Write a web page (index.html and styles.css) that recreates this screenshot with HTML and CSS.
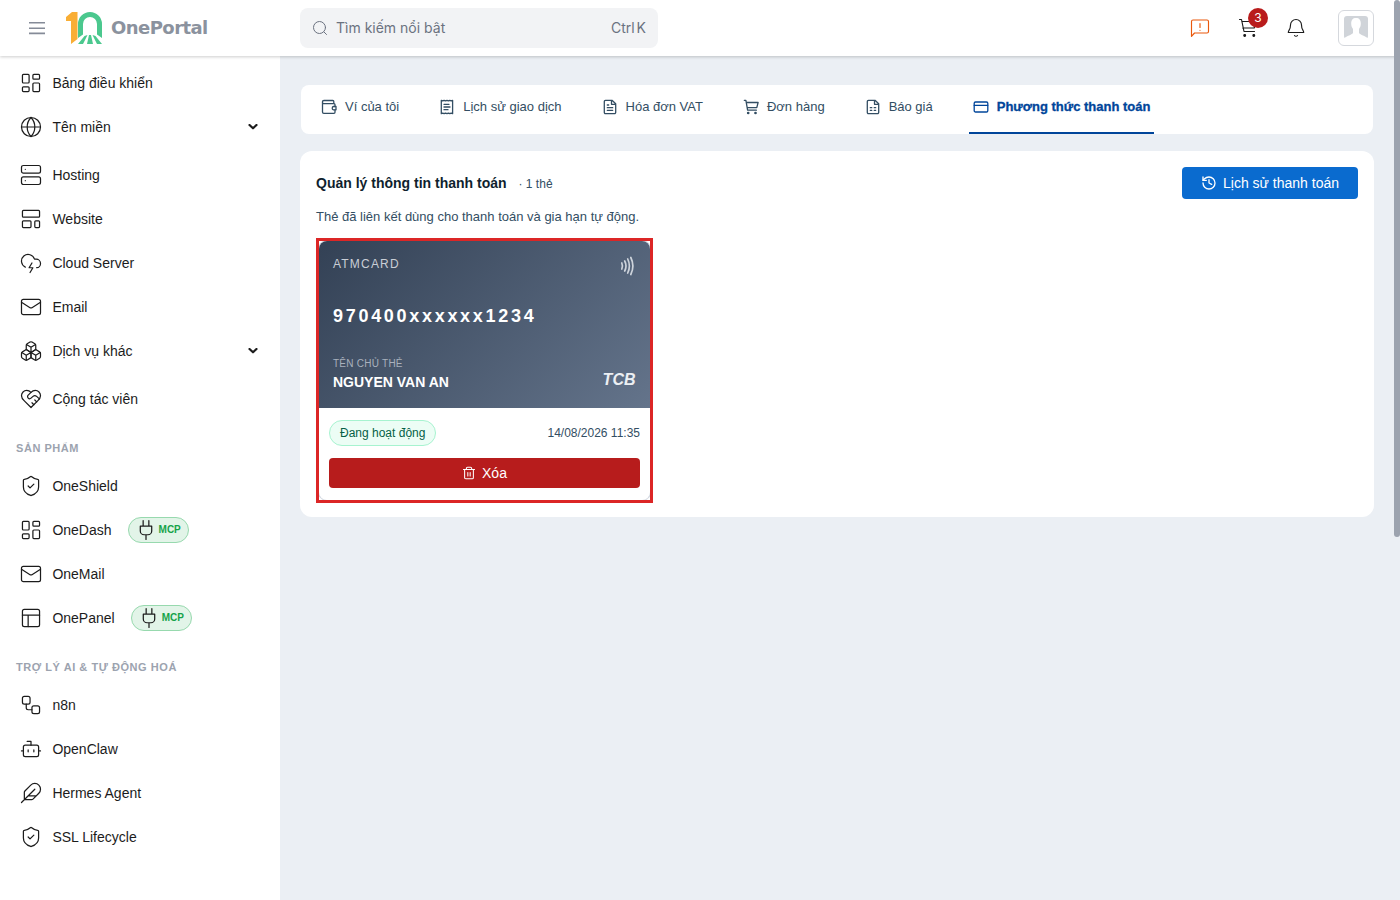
FILE: index.html
```html
<!DOCTYPE html>
<html lang="vi">
<head>
    <meta charset="UTF-8">
    <title>OnePortal</title>
    <link rel="stylesheet" href="styles.css">
</head>
<body>
    <header class="header">
        <svg class="menu-toggle" viewBox="0 0 16 14"><path d="M0 1.800h16M0 7.200h16M0 12.400h16"/></svg>
        <svg class="logo" viewBox="0 0 38 34">
            <path class="logo-one" d="M0 6 6 1h5.500v27L5 33V10H0z"/>
            <path class="logo-arch" d="M12 27V13a12 12 0 0 1 24 0v14l-5-3.500V13a7 7 0 0 0-14 0v10.500z"/>
            <path class="logo-arch" d="M18.500 25 21.500 24l-4.500 9h-5zM23 24h2l2 9h-6zM26.500 24l3 1 6.500 8h-5z"/>
        </svg>
        <span class="brand">OnePortal</span>
        <div class="search">
            <svg class="search-icon" viewBox="0 0 16 16"><circle cx="7.500" cy="7.500" r="6"/><path d="m12 12 2.500 2.500"/></svg>
            <span class="search-text">Tìm kiếm nổi bật</span>
            <span class="shortcut"><span>Ctrl</span><span>K</span></span>
        </div>
        <div class="header-actions">
            <svg class="action-icon icon-feedback" viewBox="0 0 24 24"><path d="M20.500 15.500a1.500 1.500 0 0 1-1.500 1.500H6.500L3.500 20.400V5.500A1.500 1.500 0 0 1 5 4h14a1.500 1.500 0 0 1 1.500 1.500z"/><path d="M12 7.500v4M12 14.200v.100"/></svg>
            <div class="cart">
                <svg class="action-icon" viewBox="0 0 24 24"><circle class="dot" cx="8.700" cy="19.500" r=".9"/><circle class="dot" cx="17.800" cy="19.500" r=".9"/><path d="M3.500 3.500h2l2.500 12h10.500M6.700 12h11.500l2-6.500H5.800"/></svg>
                <span class="cart-count">3</span>
            </div>
            <svg class="action-icon" viewBox="0 0 24 24"><path d="M6.500 9a5.500 5.500 0 0 1 11 0c0 5 2.200 5 2.200 7.500H4.300C4.300 14 6.500 14 6.500 9"/><path d="M10.500 19.500a1.900 1.900 0 0 0 3 0"/></svg>
            <div class="avatar">
                <svg viewBox="0 0 24 24"><rect class="avatar-bg" width="24" height="23" rx="3"/><path class="avatar-man" d="M12 2C8.700 2 7.200 4 7.200 7.500c0 2.500.700 4 1.800 5.500v4c-1.500 2.200-6 2.500-9 5.500V24h24v-1.500c-3-3-7.500-3.300-9-5.500v-4c1.100-1.500 1.800-3 1.800-5.500C16.800 4 15.300 2 12 2z"/></svg>
            </div>
        </div>
    </header>

    <div class="layout">
        <nav class="sidebar">
            <a class="nav-item">
                <svg class="icon" viewBox="0 0 24 24"><rect x="3" y="3" width="7" height="9" rx="1"/><rect x="14" y="3" width="7" height="5" rx="1"/><rect x="14" y="12" width="7" height="9" rx="1"/><rect x="3" y="16" width="7" height="5" rx="1"/></svg>
                <span>Bảng điều khiển</span>
            </a>
            <a class="nav-item has-children">
                <svg class="icon" viewBox="0 0 24 24"><circle cx="12" cy="12" r="10"/><path d="M12 2a14.500 14.500 0 0 0 0 20 14.500 14.500 0 0 0 0-20M2 12h20"/></svg>
                <span>Tên miền</span>
                <svg class="chevron" viewBox="0 0 10 6"><path d="m1.500 1 3.500 3.300L8.500 1"/></svg>
            </a>
            <a class="nav-item">
                <svg class="icon" viewBox="0 0 24 24"><rect x="2" y="2" width="20" height="8" rx="2"/><rect x="2" y="14" width="20" height="8" rx="2"/><path d="M6 6h.01M6 18h.01"/></svg>
                <span>Hosting</span>
            </a>
            <a class="nav-item">
                <svg class="icon" viewBox="0 0 24 24"><rect x="3" y="3" width="18" height="7" rx="1"/><rect x="3" y="14" width="9" height="7" rx="1"/><rect x="16" y="14" width="5" height="7" rx="1"/></svg>
                <span>Website</span>
            </a>
            <a class="nav-item">
                <svg class="icon" viewBox="0 0 24 24"><path d="M6 16.326A7 7 0 1 1 15.710 8h1.790a4.500 4.500 0 0 1 .500 8.973"/><path d="m13 12-3 5h4l-3 5"/></svg>
                <span>Cloud Server</span>
            </a>
            <a class="nav-item">
                <svg class="icon" viewBox="0 0 24 24"><rect x="2" y="4" width="20" height="16" rx="2"/><path d="m22 7-8.970 5.700a1.940 1.940 0 0 1-2.060 0L2 7"/></svg>
                <span>Email</span>
            </a>
            <a class="nav-item has-children">
                <svg class="icon" viewBox="0 0 24 24"><path d="M2.970 12.920A2 2 0 0 0 2 14.630v3.240a2 2 0 0 0 .970 1.710l3 1.800a2 2 0 0 0 2.060 0L12 19v-5.500l-5-3-4.030 2.420Z"/><path d="m7 16.500-4.740-2.850M7 16.500l5-3M7 16.500v5.170M12 13.500V19l3.970 2.380a2 2 0 0 0 2.060 0l3-1.800a2 2 0 0 0 .970-1.710v-3.240a2 2 0 0 0-.970-1.710L17 10.500l-5 3Z"/><path d="m17 16.500-5-3M17 16.500l4.740-2.850M17 16.500v5.170"/><path d="M7.970 4.420A2 2 0 0 0 7 6.130v4.370l5 3 5-3V6.130a2 2 0 0 0-.970-1.710l-3-1.800a2 2 0 0 0-2.060 0l-3 1.800Z"/><path d="M12 8 7.260 5.150M12 8l4.740-2.850M12 13.500V8"/></svg>
                <span>Dịch vụ khác</span>
                <svg class="chevron" viewBox="0 0 10 6"><path d="m1.500 1 3.500 3.300L8.500 1"/></svg>
            </a>
            <a class="nav-item">
                <svg class="icon" viewBox="0 0 24 24"><path d="M19 14c1.490-1.460 3-3.210 3-5.500A5.500 5.500 0 0 0 16.500 3c-1.760 0-3 .500-4.500 2-1.500-1.500-2.740-2-4.500-2A5.500 5.500 0 0 0 2 8.500c0 2.300 1.500 4.050 3 5.500l7 7Z"/><path d="M12 5 9.040 7.960a2.170 2.170 0 0 0 0 3.080c.820.820 2.130.850 3 .070l2.070-1.900a2.820 2.820 0 0 1 3.790 0l2.960 2.660M18 15l-2-2M15 18l-2-2"/></svg>
                <span>Cộng tác viên</span>
            </a>

            <h3 class="nav-heading">SẢN PHẨM</h3>
            <a class="nav-item">
                <svg class="icon" viewBox="0 0 24 24"><path d="M20 13c0 5-3.500 7.500-7.660 8.950a1 1 0 0 1-.670-.010C7.500 20.500 4 18 4 13V6a1 1 0 0 1 1-1c2 0 4.500-1.200 6.240-2.720a1.170 1.170 0 0 1 1.520 0C14.510 3.810 17 5 19 5a1 1 0 0 1 1 1z"/><path d="m9 12 2 2 4-4"/></svg>
                <span>OneShield</span>
            </a>
            <a class="nav-item">
                <svg class="icon" viewBox="0 0 24 24"><rect x="3" y="3" width="7" height="9" rx="1"/><rect x="14" y="3" width="7" height="5" rx="1"/><rect x="14" y="12" width="7" height="9" rx="1"/><rect x="3" y="16" width="7" height="5" rx="1"/></svg>
                <span>OneDash</span>
                <span class="mcp"><svg class="icon" viewBox="0 0 24 24"><path d="M12 22v-5M9 8V2M15 8V2M18 8v5a4 4 0 0 1-4 4h-4a4 4 0 0 1-4-4V8Z"/></svg><b>MCP</b></span>
            </a>
            <a class="nav-item">
                <svg class="icon" viewBox="0 0 24 24"><rect x="2" y="4" width="20" height="16" rx="2"/><path d="m22 7-8.970 5.700a1.940 1.940 0 0 1-2.060 0L2 7"/></svg>
                <span>OneMail</span>
            </a>
            <a class="nav-item">
                <svg class="icon" viewBox="0 0 24 24"><rect x="3" y="3" width="18" height="18" rx="2"/><path d="M3 9h18M9 21V9"/></svg>
                <span>OnePanel</span>
                <span class="mcp"><svg class="icon" viewBox="0 0 24 24"><path d="M12 22v-5M9 8V2M15 8V2M18 8v5a4 4 0 0 1-4 4h-4a4 4 0 0 1-4-4V8Z"/></svg><b>MCP</b></span>
            </a>

            <h3 class="nav-heading">TRỢ LÝ AI &amp; TỰ ĐỘNG HOÁ</h3>
            <a class="nav-item">
                <svg class="icon" viewBox="0 0 24 24"><rect x="3" y="3" width="8" height="8" rx="2"/><path d="M7 11v4a2 2 0 0 0 2 2h4"/><rect x="13" y="13" width="8" height="8" rx="2"/></svg>
                <span>n8n</span>
            </a>
            <a class="nav-item">
                <svg class="icon" viewBox="0 0 24 24"><path d="M12 8V4H8"/><rect x="4" y="8" width="16" height="12" rx="2"/><path d="M2 14h2M20 14h2M15 13v2M9 13v2"/></svg>
                <span>OpenClaw</span>
            </a>
            <a class="nav-item">
                <svg class="icon" viewBox="0 0 24 24"><path d="M12.670 19a2 2 0 0 0 1.416-.588l6.154-6.172a6 6 0 0 0-8.490-8.490L5.586 9.914A2 2 0 0 0 5 11.328V18a1 1 0 0 0 1 1zM16 8 2 22M17.500 15H9"/></svg>
                <span>Hermes Agent</span>
            </a>
            <a class="nav-item">
                <svg class="icon" viewBox="0 0 24 24"><path d="M20 13c0 5-3.500 7.500-7.660 8.950a1 1 0 0 1-.670-.010C7.500 20.500 4 18 4 13V6a1 1 0 0 1 1-1c2 0 4.500-1.200 6.240-2.720a1.170 1.170 0 0 1 1.520 0C14.510 3.810 17 5 19 5a1 1 0 0 1 1 1z"/><path d="m9 12 2 2 4-4"/></svg>
                <span>SSL Lifecycle</span>
            </a>
        </nav>

        <main class="content">
            <div class="tabs">
                <a class="tab">
                    <svg class="tab-icon" viewBox="0 0 16 16"><path d="M12.800 4.700V2.500A1 1 0 0 0 11.800 1.500H3a1.500 1.500 0 0 0 0 3.200h10a1 1 0 0 1 1 1v1.800M1.500 3V13A1.300 1.300 0 0 0 2.800 14.300h10.200a1 1 0 0 0 1-1v-2.500"/><path d="M15 7.500h-2.500a1.700 1.700 0 0 0 0 3.300H15z"/></svg>
                    <span>Ví của tôi</span>
                </a>
                <a class="tab">
                    <svg class="tab-icon" viewBox="0 0 16 16"><path d="M2.300 1.300v13.400l1.400-.600 1.400.600 1.400-.600 1.500.600 1.400-.600 1.400.600 1.400-.600 1.400.600V1.300l-1.400.600-1.400-.600-1.400.600L8 1.300l-1.500.600-1.400-.600-1.400.600zM5 5.300h5M5 8h6M5 10.700h4"/></svg>
                    <span>Lịch sử giao dịch</span>
                </a>
                <a class="tab">
                    <svg class="tab-icon" viewBox="0 0 16 16"><path d="M10 1.300H3.500A1.300 1.300 0 0 0 2.300 2.700v10.600A1.300 1.300 0 0 0 3.500 14.700h8.900a1.300 1.300 0 0 0 1.300-1.400V4.700zM9.500 1.500v3.800h4M5.300 6h1.400M5.300 8.700h5.400M5.300 11.300h5.400"/></svg>
                    <span>Hóa đơn VAT</span>
                </a>
                <a class="tab">
                    <svg class="tab-icon" viewBox="0 0 16 16"><path d="M1.300 1.300h1.600l1.700 9.900h8.800M3.400 3.500h11.700l-1.300 5.200H4.200"/><circle class="dot" cx="5.200" cy="14" r=".7"/><circle class="dot" cx="12.500" cy="14" r=".7"/></svg>
                    <span>Đơn hàng</span>
                </a>
                <a class="tab">
                    <svg class="tab-icon" viewBox="0 0 16 16"><path d="M10 1.300H3.500A1.300 1.300 0 0 0 2.300 2.700v10.600A1.300 1.300 0 0 0 3.500 14.700h8.900a1.300 1.300 0 0 0 1.300-1.400V4.700zM9.500 1.500v3.800h4M5.300 8.700h1.500M9.200 8.700h1.500M5.300 11.300h1.500M9.200 11.300h1.500"/></svg>
                    <span>Báo giá</span>
                </a>
                <a class="tab active">
                    <svg class="tab-icon" viewBox="0 0 16 16"><rect x="1.200" y="3" width="13.600" height="10" rx="1.300"/><path d="M1.200 6.300h13.600"/></svg>
                    <span>Phương thức thanh toán</span>
                </a>
            </div>

            <section class="panel">
                <div class="panel-header">
                    <h2>Quản lý thông tin thanh toán</h2>
                    <span class="card-total">· 1 thẻ</span>
                    <button class="btn btn-history">
                        <svg viewBox="0 0 24 24"><path d="M3 12a9 9 0 1 0 9-9 9.750 9.750 0 0 0-6.740 2.740L3 8"/><path d="M3 3v5h5M12 7v5l4 2"/></svg>
                        <span>Lịch sử thanh toán</span>
                    </button>
                </div>
                <p class="description">Thẻ đã liên kết dùng cho thanh toán và gia hạn tự động.</p>

                <div class="card-highlight">
                    <div class="payment-card">
                        <div class="card-face">
                            <div class="card-top">
                                <span class="card-type">ATMCARD</span>
                                <svg class="contactless" viewBox="0 0 16 20"><path d="M1.800 7q1.300 3 0 6M4.700 5q2.600 5 0 10M7.700 3q3.400 7 0 14M10.800 1.500q4.200 8.500 0 17"/></svg>
                            </div>
                            <div class="card-number">970400xxxxxx1234</div>
                            <div class="card-bottom">
                                <div>
                                    <div class="holder-label">TÊN CHỦ THẺ</div>
                                    <div class="holder-name">NGUYEN VAN AN</div>
                                </div>
                                <span class="bank">TCB</span>
                            </div>
                        </div>
                        <div class="card-footer">
                            <div class="card-status">
                                <span class="status">Đang hoạt động</span>
                                <span class="date">14/08/2026 11:35</span>
                            </div>
                            <button class="btn btn-delete">
                                <svg viewBox="0 0 24 24"><path d="M2.500 6h19M19.500 6v14a2 2 0 0 1-2 2h-11a2 2 0 0 1-2-2V6M7.500 6V4a2 2 0 0 1 2-2h5a2 2 0 0 1 2 2v2M10 11v6M14 11v6"/></svg>
                                <span>Xóa</span>
                            </button>
                        </div>
                    </div>
                </div>
            </section>
        </main>
    </div>
    <div class="scroll-thumb"></div>
</body>
</html>
```
FILE: styles.css
```css
* {
    box-sizing: border-box;
}

body {
    margin: 0;
    height: 900px;
    overflow: hidden;
    background-color: #ebeff4;
    font-family: "Liberation Sans", Arial, sans-serif;
    font-size: 14px;
    color: #1c1c1c;
}

svg {
    display: block;
    flex-shrink: 0;
    fill: none;
    stroke: currentColor;
    stroke-linecap: round;
    stroke-linejoin: round;
}

.icon {
    width: 24px;
    height: 24px;
    padding: 0.6px;
    stroke-width: 1.3;
}

.dot {
    fill: currentColor;
}

/* Header */
.header {
    position: relative;
    display: flex;
    align-items: center;
    height: 56px;
    padding: 0 26px 0 29px;
    background-color: #fff;
    box-shadow: 0 1px 3px rgba(0, 0, 0, 0.2);
}

.menu-toggle {
    width: 16px;
    height: 14px;
    stroke: #858b98;
    stroke-width: 1.6;
}

.logo {
    width: 38px;
    height: 34px;
    margin-left: 21px;
    stroke: none;
}

.logo-one {
    fill: #f9ae35;
}

.logo-arch {
    fill: #4bc88e;
}

.brand {
    width: 189px;
    margin-left: 7px;
    padding-bottom: 2px;
    font-family: "DejaVu Sans", sans-serif;
    font-size: 18px;
    font-weight: bold;
    letter-spacing: -0.55px;
    color: #8b929e;
}

.search {
    display: flex;
    align-items: center;
    width: 358px;
    height: 40px;
    padding: 0 12px;
    border-radius: 8px;
    background-color: #f2f3f5;
    font-family: Inter, sans-serif;
    color: #6b7280;
}

.search-icon {
    width: 16px;
    height: 16px;
    margin-right: 8px;
    stroke-width: 1;
}

.search-text {
    padding-bottom: 2px;
}

.shortcut {
    display: flex;
    gap: 2px;
    margin-left: auto;
    padding-bottom: 2px;
}

.header-actions {
    display: flex;
    align-items: center;
    gap: 24px;
    margin-left: auto;
}

.action-icon {
    width: 24px;
    height: 24px;
    stroke-width: 1.15;
}

.icon-feedback {
    color: #ea580c;
}

.cart {
    position: relative;
}

.cart-count {
    position: absolute;
    top: -8px;
    right: -8px;
    width: 20px;
    height: 20px;
    border-radius: 50%;
    background-color: #b91c1c;
    color: #fff;
    font-family: Inter, sans-serif;
    font-size: 12px;
    line-height: 20px;
    text-align: center;
}

.avatar {
    width: 36px;
    height: 36px;
    margin-left: 6px;
    padding: 5px;
    border: 1px solid #d5d8dd;
    border-radius: 6px;
}

.avatar svg {
    width: 24px;
    height: 24px;
    stroke: none;
}

.avatar-bg {
    fill: #d0d4d9;
}

.avatar-man {
    fill: #fff;
}

/* Sidebar */
.layout {
    display: flex;
    height: 844px;
}

.sidebar {
    width: 280px;
    padding-top: 5px;
    background-color: #fff;
}

.nav-item {
    display: flex;
    align-items: center;
    height: 44px;
    padding: 0 22px 0 19px;
}

.nav-item > span:first-of-type {
    margin-left: 9.4px;
}

.has-children {
    margin-bottom: 4px;
}

.chevron {
    width: 10px;
    height: 6px;
    margin-left: auto;
    stroke-width: 2.2;
}

.nav-heading {
    height: 43px;
    margin: 0;
    padding: 20px 16px 0;
    font-size: 11px;
    line-height: 14px;
    letter-spacing: 0.55px;
    color: #9ca3af;
}

.mcp {
    display: flex;
    align-items: center;
    width: 61px;
    height: 26px;
    margin-left: 16px;
    padding-left: 5px;
    border: 1px solid #97d9ae;
    border-radius: 13px;
    background-color: #e2f4e8;
    color: #16a34a;
    font-size: 10px;
}

.mcp .icon {
    margin-right: 1px;
    color: #1c1c1c;
}

.mcp b {
    padding-bottom: 2px;
}

/* Content */
.content {
    flex: 1;
    padding: 29px 26px 0 20px;
}

.tabs {
    display: flex;
    gap: 32px;
    height: 49px;
    margin: 0 1px;
    padding: 0 16px;
    border-radius: 8px;
    background-color: #fff;
    font-size: 13px;
    color: #334e63;
}

.tab {
    display: flex;
    gap: 8px;
    padding: 14px 4px 0;
    line-height: 16px;
}

.tab.active {
    border-bottom: 2px solid #00459a;
    color: #00459a;
    font-weight: bold;
    -webkit-text-stroke: 0.3px #00459a;
}

.tab-icon {
    width: 16px;
    height: 16px;
    stroke-width: 1.3;
}

.panel {
    height: 366px;
    margin-top: 17px;
    padding: 16px;
    border-radius: 12px;
    background-color: #fff;
}

.panel-header {
    display: flex;
    align-items: center;
}

.panel-header h2 {
    margin: 0;
    font-size: 14px;
    color: #0f1f2e;
}

.card-total {
    margin-left: 12px;
    padding-top: 1px;
    font-size: 12px;
    color: #334e63;
}

.description {
    margin: 10px 0 14px;
    font-size: 13px;
    line-height: 15px;
    color: #334e63;
}

.btn {
    display: flex;
    align-items: center;
    justify-content: center;
    border: none;
    border-radius: 4px;
    color: #fff;
    font-family: inherit;
    font-size: 14px;
}

.btn-history {
    width: 176px;
    height: 32px;
    margin-left: auto;
    padding: 0;
    gap: 6px;
    background-color: #0a6bcf;
}

.btn-history svg {
    width: 16px;
    height: 16px;
    stroke-width: 2;
}

.card-highlight {
    width: 337px;
    height: 265px;
    overflow: hidden;
    border: 3px solid #dc2626;
}

.payment-card {
    height: 259px;
    overflow: hidden;
    border-radius: 8px;
    box-shadow: 0 0 0 1px #d5dae2;
}

.card-face {
    height: 167px;
    padding: 15px 14.5px 0 14px;
    background: linear-gradient(135deg, #334155, #64748b);
    color: #fff;
}

.card-top {
    display: flex;
    justify-content: space-between;
    height: 50px;
}

.card-type {
    font-size: 12px;
    line-height: 16px;
    letter-spacing: 1.2px;
    color: #c9ced6;
}

.contactless {
    width: 16px;
    height: 20px;
    stroke: #cdd3db;
    stroke-width: 1.7;
}

.card-number {
    font-size: 18px;
    font-weight: bold;
    line-height: 20px;
    letter-spacing: 2.7px;
}

.card-bottom {
    display: flex;
    justify-content: space-between;
    align-items: flex-end;
    margin-top: 31px;
}

.holder-label {
    font-size: 10px;
    line-height: 14px;
    letter-spacing: 0.25px;
    color: #a9b1bd;
}

.holder-name {
    margin-top: 3px;
    font-size: 14px;
    font-weight: bold;
    line-height: 16px;
}

.bank {
    font-size: 16px;
    font-style: italic;
    font-weight: bold;
    line-height: 20px;
    color: #eceff3;
}

.card-footer {
    padding: 12px 10px 0;
}

.card-status {
    display: flex;
    align-items: center;
    justify-content: space-between;
    margin-bottom: 12px;
    font-size: 12px;
    color: #334e63;
}

.status {
    height: 26px;
    padding: 0 10px;
    border: 1px solid #a7f3d0;
    border-radius: 13px;
    background-color: #ecfdf5;
    color: #065f46;
    line-height: 24px;
}

.btn-delete {
    width: 100%;
    height: 30px;
    gap: 6px;
    background-color: #b71c1c;
}

.btn-delete svg {
    width: 14px;
    height: 14px;
    stroke-width: 1.8;
}

/* Page scrollbar, lies over the header */
.scroll-thumb {
    position: absolute;
    top: 0;
    right: 0;
    width: 6px;
    height: 537px;
    border-radius: 3px;
    background-color: #9ca3af;
}
```
